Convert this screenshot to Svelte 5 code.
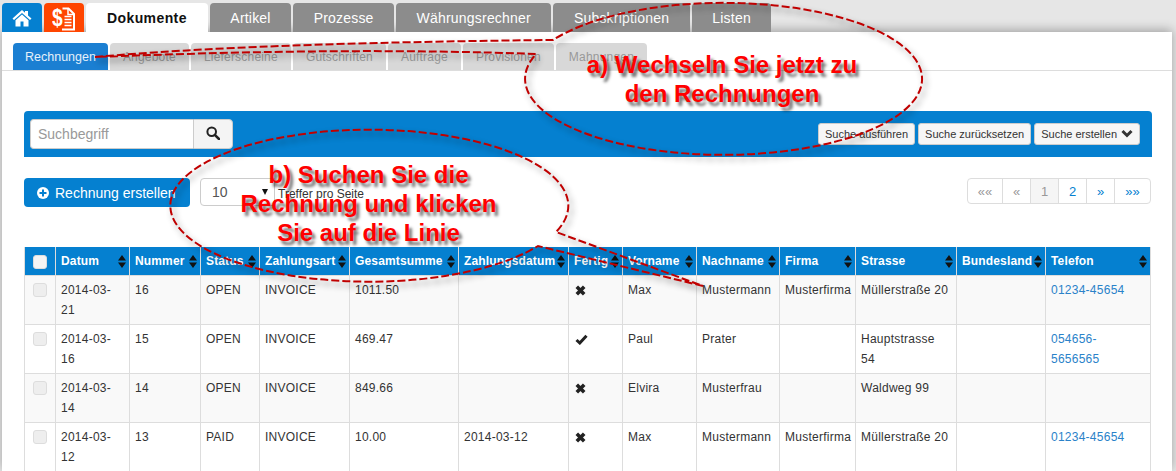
<script>
  const tabs = ['Artikel', 'Prozesse', 'Währungsrechner', 'Subskriptionen', 'Listen'];
  const subTabs = ['Angebote', 'Lieferscheine', 'Gutschriften', 'Aufträge', 'Provisionen', 'Mahnungen'];
  const columns = ['Datum', 'Nummer', 'Status', 'Zahlungsart', 'Gesamtsumme', 'Zahlungsdatum', 'Fertig', 'Vorname', 'Nachname', 'Firma', 'Strasse', 'Bundesland', 'Telefon'];
  const widths = [31, 74, 71, 59, 90, 109, 110, 54, 74, 83, 76, 101, 89, 105];
  const rows = [
    { date: '2014-03-21', nr: 16, status: 'OPEN', total: '1011.50', paid: '', done: false, first: 'Max', last: 'Mustermann', company: 'Musterfirma', street: 'Müllerstraße 20', phone: '01234-45654' },
    { date: '2014-03-16', nr: 15, status: 'OPEN', total: '469.47', paid: '', done: true, first: 'Paul', last: 'Prater', company: '', street: 'Hauptstrasse 54', phone: '054656-5656565' },
    { date: '2014-03-14', nr: 14, status: 'OPEN', total: '849.66', paid: '', done: false, first: 'Elvira', last: 'Musterfrau', company: '', street: 'Waldweg 99', phone: '' },
    { date: '2014-03-12', nr: 13, status: 'PAID', total: '10.00', paid: '2014-03-12', done: false, first: 'Max', last: 'Mustermann', company: 'Musterfirma', street: 'Müllerstraße 20', phone: '01234-45654' }
  ];
  const pages = [
    { label: '««', off: true },
    { label: '«', off: true },
    { label: '1', current: true },
    { label: '2' },
    { label: '»' },
    { label: '»»' }
  ];
</script>

<div class="page">
  <nav class="tabs">
    <a class="icon-tab home" href="#home" aria-label="Start">
      <svg width="20" height="18" viewBox="0 0 20 18"><path d="M10 1 0.5 9.500 2 11 10 4 18 11 19.500 9.500 16 6.400V2h-3v1.800zM3.500 11.200V17.500h5v-5h3v5h5v-6.300L10 5.500z" fill="#fff"/></svg>
    </a>
    <a class="icon-tab docs" href="#docs" aria-label="Dokumente">
      <svg width="24" height="26" viewBox="0 0 24 26">
        <text x="0" y="21" class="dollar" transform="scale(0.8 1)">$</text>
        <path d="M10.500 3.500h6l5.500 5.500V24.500H10" fill="none" stroke="#fff" stroke-width="2"/>
        <path d="M16 3.500v6h6" fill="none" stroke="#fff" stroke-width="1.500"/>
        <path d="M12.500 11.500h7M12.500 14.500h7M12.500 17.500h7M12.500 20.500h7" stroke="#fff" stroke-width="1.500"/>
      </svg>
    </a>
    <a class="tab active" href="#dokumente">Dokumente</a>
    {#each tabs as tab}
      <a class="tab" href="#tab">{tab}</a>
    {/each}
  </nav>

  <main class="panel">
    <nav class="subtabs">
      <a class="subtab active" href="#rechnungen">Rechnungen</a>
      {#each subTabs as tab}
        <a class="subtab" href="#sub">{tab}</a>
      {/each}
    </nav>

    <div class="content">
      <div class="searchbar">
        <div class="search">
          <input placeholder="Suchbegriff" />
          <button class="search-btn" aria-label="Suchen">
            <svg width="14" height="14" viewBox="0 0 14 14"><circle cx="5.700" cy="5.700" r="4.300" fill="none" stroke="#222" stroke-width="2"/><path d="M8.800 8.800 13 13" stroke="#222" stroke-width="2.500" stroke-linecap="round"/></svg>
          </button>
        </div>
        <div class="search-actions">
          <button>Suche ausführen</button>
          <button>Suche zurücksetzen</button>
          <button>Suche erstellen
            <svg width="12" height="9" viewBox="0 0 12 9"><path d="M1.500 2 6 6.500 10.500 2" fill="none" stroke="#333" stroke-width="3"/></svg>
          </button>
        </div>
      </div>

      <div class="toolbar">
        <button class="create">
          <svg width="12" height="12" viewBox="0 0 12 12"><circle cx="6" cy="6" r="6" fill="#fff"/><path d="M6 2.500v7M2.500 6h7" stroke="#0580d0" stroke-width="2"/></svg>
          Rechnung erstellen
        </button>
        <div class="select">10</div>
        <span class="per-page">Treffer pro Seite</span>
        <div class="pagination">
          {#each pages as page}
            <a href="#page" class:off={page.off} class:current={page.current}>{page.label}</a>
          {/each}
        </div>
      </div>

      <table>
        <colgroup>
          {#each widths as width}
            <col style="width: {width}px" />
          {/each}
        </colgroup>
        <thead>
          <tr>
            <th class="check"><span class="box head-box"></span></th>
            {#each columns as column}
              <th>
                <div class="th">
                  {column}
                  <svg width="8" height="13" viewBox="0 0 8 13"><path d="M4 0 8 5.500H0zM0 7.500h8L4 13z" fill="#111"/></svg>
                </div>
              </th>
            {/each}
          </tr>
        </thead>
        <tbody>
          {#each rows as row}
            <tr>
              <td class="check"><span class="box"></span></td>
              <td>{row.date}</td>
              <td>{row.nr}</td>
              <td>{row.status}</td>
              <td>INVOICE</td>
              <td>{row.total}</td>
              <td>{row.paid}</td>
              <td class="state">
                {#if row.done}
                  <svg width="13" height="11" viewBox="0 0 13 11"><path d="M1.500 6 4.800 9 11.500 1.800" fill="none" stroke="#222" stroke-width="3"/></svg>
                {:else}
                  <svg width="11" height="11" viewBox="0 0 11 11"><path d="M1.800 1.800l7.400 7.400M9.200 1.800 1.800 9.200" stroke="#222" stroke-width="3.600"/></svg>
                {/if}
              </td>
              <td>{row.first}</td>
              <td>{row.last}</td>
              <td>{row.company}</td>
              <td>{row.street}</td>
              <td></td>
              <td><a class="phone" href="#tel">{row.phone}</a></td>
            </tr>
          {/each}
        </tbody>
      </table>
    </div>
  </main>

  <!-- callouts drawn over the screen -->
  <svg class="callouts" width="1176" height="471" viewBox="0 0 1176 471">
    <path d="M95 57Q250 43 553 40A198.500 76 0 1 1 536 54Q350 47 95 57" />
    <path d="M703 286 538 246A199 76 0 1 1 556 232L703 286" />
  </svg>
  <div class="note note-a">a) Wechseln Sie jetzt zu<br />den Rechnungen</div>
  <div class="note note-b">b) Suchen Sie die<br />Rechnung und klicken<br />Sie auf die Linie</div>
</div>

<style>
  :global(body) {
    margin: 0;
    background: #e6e6e6;
    font-family: "Liberation Sans", Arial, sans-serif;
  }
  .page {
    position: relative;
    height: 471px;
    overflow: hidden;
    padding: 3px 4px 0 2px;
    box-sizing: border-box;
    color: #333;
  }
  a {
    text-decoration: none;
  }

  .tabs {
    position: relative;
    z-index: 1;
    display: flex;
    gap: 2px;
    height: 29px;
  }
  .icon-tab {
    width: 40px;
    display: flex;
    align-items: center;
    justify-content: center;
    border-radius: 4px 4px 0 0;
  }
  .home {
    background: #0580d0;
  }
  .docs {
    background: #ff4500;
  }
  .dollar {
    font: bold 24px "Liberation Sans", sans-serif;
    fill: #fff;
  }
  .tab {
    padding: 0 20.500px;
    background: #8c8c8c;
    color: #fff;
    font-size: 14px;
    letter-spacing: 0.2px;
    line-height: 30px;
    border-radius: 4px 4px 0 0;
  }
  .tab.active {
    padding: 0 21px;
    background: #fff;
    color: #111;
    font-weight: bold;
    letter-spacing: 0.4px;
  }

  .panel {
    height: 439px;
    background: #fff;
    box-shadow: 0 -2px 10px rgba(0, 0, 0, 0.3);
  }
  .subtabs {
    display: flex;
    gap: 2px;
    height: 27px;
    padding: 11px 0 0 11px;
    border-bottom: 1px solid #ddd;
  }
  .subtab {
    padding: 0 13px;
    background: #d8d8d8;
    color: #999;
    font-size: 12px;
    letter-spacing: 0.2px;
    line-height: 28px;
    border-radius: 4px 4px 0 0;
  }
  .subtab.active {
    padding: 0 12px;
    background: #1b7fd2;
    color: #e6f1fa;
    font-size: 12.500px;
    letter-spacing: 0;
  }

  .content {
    padding: 40px 20px 0 22px;
  }
  .searchbar {
    display: flex;
    justify-content: space-between;
    align-items: center;
    height: 46px;
    padding: 0 12px 0 6px;
    background: #0580d0;
    border-radius: 4px 4px 0 0;
  }
  .search {
    display: flex;
    height: 30px;
  }
  .search input {
    width: 163px;
    box-sizing: border-box;
    padding: 0 6px 0 7px;
    border: 1px solid #ccc;
    border-right: 0;
    border-radius: 4px 0 0 4px;
    font: 14px "Liberation Sans", sans-serif;
    outline: none;
  }
  .search input::placeholder {
    color: #999;
  }
  .search-btn {
    width: 40px;
    padding: 0;
    border: 1px solid #ccc;
    border-radius: 0 4px 4px 0;
    background: #f4f4f4;
  }
  .search-actions {
    display: flex;
    gap: 3px;
    margin-top: -1px;
  }
  .search-actions button {
    display: flex;
    align-items: center;
    gap: 4px;
    height: 22px;
    padding: 0 6px;
    border: 1px solid #ccc;
    border-radius: 3px;
    background: #f6f6f6;
    color: #333;
    font: 11px "Liberation Sans", sans-serif;
    white-space: nowrap;
  }

  .toolbar {
    display: flex;
    align-items: flex-start;
    margin-top: 21px;
    height: 69px;
  }
  .create {
    display: flex;
    align-items: center;
    gap: 6px;
    height: 29px;
    width: 166px;
    padding: 0 13px;
    border: 0;
    border-radius: 4px;
    background: #0580d0;
    color: #fff;
    font: 14px "Liberation Sans", sans-serif;
    white-space: nowrap;
  }
  .select {
    position: relative;
    box-sizing: border-box;
    width: 75px;
    height: 28px;
    margin-left: 10px;
    padding-left: 11px;
    border: 1px solid #ccc;
    border-radius: 4px 0 0 4px;
    font-size: 14px;
    line-height: 26px;
    color: #555;
  }
  .select::after {
    content: '';
    position: absolute;
    right: 6px;
    top: 10px;
    border: 3.500px solid transparent;
    border-top: 6px solid #111;
    border-bottom: 0;
  }
  .per-page {
    margin: 9px 0 0 3px;
    font-size: 12px;
  }
  .pagination {
    display: flex;
    margin-left: auto;
    margin-right: 1px;
    height: 24px;
    border: 1px solid #ddd;
    border-radius: 4px;
  }
  .pagination a {
    width: 27px;
    border-left: 1px solid #ddd;
    color: #0580d0;
    font-size: 13px;
    line-height: 25px;
    text-align: center;
  }
  .pagination a:first-child {
    width: 34px;
    border-left: 0;
  }
  .pagination a:last-child {
    width: 35px;
  }
  .pagination .off {
    color: #999;
  }
  .pagination .current {
    background: #f5f5f5;
    color: #999;
  }

  table {
    width: 1126px;
    table-layout: fixed;
    border-collapse: collapse;
    font-size: 12px;
    letter-spacing: 0.25px;
    line-height: 20px;
  }
  th {
    height: 28px;
    padding: 0 3px 0 5px;
    background: #0580d0;
    border-left: 1px solid #ddd;
    border-right: 1px solid #ddd;
    color: #fff;
    letter-spacing: 0.15px;
    text-align: left;
  }
  .th {
    display: flex;
    justify-content: space-between;
    align-items: center;
    white-space: nowrap;
  }
  td {
    padding: 4px 5px;
    border: 1px solid #ddd;
    vertical-align: top;
  }
  tbody tr {
    height: 49px;
  }
  tbody tr:nth-child(odd) {
    background: #f9f9f9;
  }
  th.check,
  td.check {
    padding: 0;
    text-align: center;
  }
  .box {
    display: inline-block;
    width: 12px;
    height: 12px;
    margin-top: 7px;
    border: 1px solid #ddd;
    border-radius: 3px;
    background: #eee;
    vertical-align: top;
  }
  .head-box {
    margin-top: 1px;
    background: #f4f4f4;
    vertical-align: middle;
  }
  .state {
    padding-top: 6px;
    padding-left: 6px;
  }
  .phone {
    color: #2a82c9;
  }

  .callouts {
    position: absolute;
    left: 0;
    top: 0;
    z-index: 2;
    pointer-events: none;
    filter: drop-shadow(3px 4px 3px rgba(0, 0, 0, 0.45));
  }
  .callouts path {
    fill: none;
    stroke: #c00000;
    stroke-width: 2;
    stroke-dasharray: 8 3;
  }
  .note {
    position: absolute;
    z-index: 3;
    color: #f00;
    font-size: 24px;
    font-weight: bold;
    line-height: 29px;
    text-align: center;
    white-space: nowrap;
    text-shadow: 3px 4px 3px rgba(0, 0, 0, 0.55);
    transform: translateX(-50%);
  }
  .note-a {
    left: 722px;
    top: 50px;
  }
  .note-b {
    left: 368.500px;
    top: 160px;
  }
</style>
